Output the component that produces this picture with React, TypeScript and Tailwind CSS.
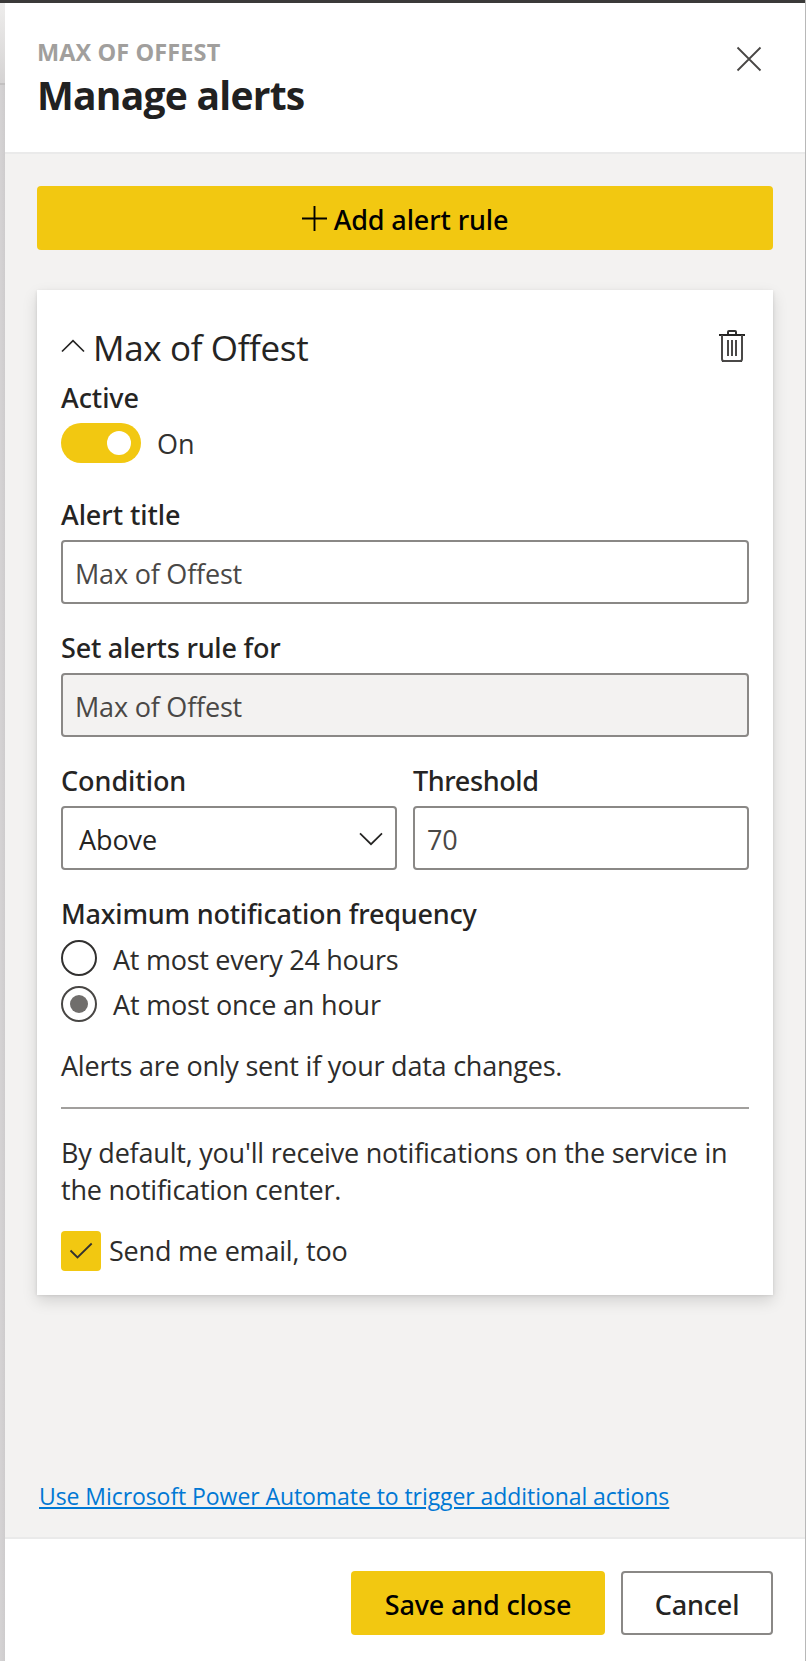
import type { ReactNode } from "react";

const body = "font-['Open_Sans',sans-serif] text-[27px] leading-[38px] font-normal whitespace-nowrap";
const semi = "font-['Noto_Sans',sans-serif] text-[27px] leading-[40px] font-medium whitespace-nowrap";

function Label({ tracking, children }: { tracking: string; children: ReactNode }) {
  return <label className={`block text-[#252423] ${semi} ${tracking}`}>{children}</label>;
}

function Field({ value, disabled = false }: { value: string; disabled?: boolean }) {
  return (
    <div
      className={`mt-[5px] flex h-16 items-center rounded border-2 border-[#8a8886] pt-[3px] pl-3 ${disabled ? "bg-[#f3f2f1]" : "bg-white"}`}
    >
      <span className={`${body} tracking-[-0.2px] text-[#4a4846]`}>{value}</span>
    </div>
  );
}

function Radio({ checked, tracking, pad, children }: { checked: boolean; tracking: string; pad: string; children: ReactNode }) {
  return (
    <div className="flex h-9 items-center gap-4">
      <span
        className={`flex size-9 shrink-0 items-center justify-center rounded-full border-2 ${checked ? "border-[#484644]" : "border-[#323130]"}`}
      >
        {checked && <span className="size-[18px] rounded-full bg-[#706e6c]" />}
      </span>
      <span className={`${body} ${tracking} ${pad} text-[#2d2c2b]`}>{children}</span>
    </div>
  );
}

function Chevron({ up = false }: { up?: boolean }) {
  return (
    <svg
      width="24"
      height="14"
      viewBox="0 0 24 14"
      fill="none"
      stroke="#252423"
      strokeWidth="1.7"
      className={up ? "mb-[3px] shrink-0" : "mt-px shrink-0"}
    >
      <path d={up ? "M1 12.5 12 1.6l11 10.9" : "M1 1.3l11 10.9L23 1.3"} />
    </svg>
  );
}

export default function App() {
  return (
    <div className="flex h-[1661px] w-[806px] overflow-hidden bg-white">
      <div className="flex min-w-0 flex-1 flex-col">
        <div className="h-[3px] shrink-0 bg-[#3b3a39]" />
        <div className="flex min-h-0 flex-1">
          <div className="flex w-[5px] shrink-0 flex-col">
            <div className="h-20 bg-linear-to-b from-[#eeedec] to-[#d5d3d3]" />
            <div className="h-0.5 bg-[#c2c0c0]" />
            <div className="flex-1 bg-linear-to-r from-[#d5d3d4] to-[#cecccd]" />
          </div>

          <div className="flex min-w-0 flex-1 flex-col">
            <header className="flex h-[151px] shrink-0 justify-between border-b-2 border-[#eaeaea] bg-white pt-[33px] pr-[43px] pl-8">
              <div>
                <div className="font-['Open_Sans',sans-serif] text-[23.5px] leading-8 font-bold tracking-[0.1px] whitespace-nowrap text-[#a19f9d]">
                  MAX OF OFFEST
                </div>
                <h1 className="font-['Open_Sans',sans-serif] text-[39px] leading-[54px] font-bold tracking-[-0.75px] whitespace-nowrap text-[#212121]">
                  Manage alerts
                </h1>
              </div>
              <svg width="26" height="26" viewBox="0 0 26 26" fill="none" stroke="#484644" strokeWidth="1.8" className="mt-2.5">
                <path d="M1.5 1.5l23 23M24.5 1.5l-23 23" />
              </svg>
            </header>

            <main className="flex min-h-0 flex-1 flex-col bg-[#f3f2f1] px-8 pt-8 pb-[25px]">
              <button className="flex h-16 shrink-0 items-center justify-center gap-[7px] rounded bg-[#f2c811] text-black">
                <svg width="25" height="25" viewBox="0 0 25 25" fill="none" stroke="#000" strokeWidth="1.9">
                  <path d="M12.5 0v25M0 12.5h25" />
                </svg>
                <span className={`${semi} pt-[3px] tracking-[-0.12px]`}>Add alert rule</span>
              </button>

              <section className="mt-10 h-[1005px] shrink-0 bg-white px-6 pt-[33px] shadow-[0_6.4px_14.4px_rgba(0,0,0,0.132),0_1.2px_3.6px_rgba(0,0,0,0.108)]">
                <div className="flex h-12 items-center gap-2">
                  <Chevron up />
                  <h2 className="pt-[2px] font-['Open_Sans',sans-serif] text-[35px] leading-[48px] font-normal tracking-[-0.35px] whitespace-nowrap text-[#252423]">
                    Max of Offest
                  </h2>
                  <svg width="28" height="34" viewBox="0 0 28 34" fill="none" className="mr-[3px] mb-[2px] ml-auto">
                    <path d="M1 6h26M4 31.9h20" stroke="#252423" strokeWidth="2" />
                    <path d="M10 5V3q0-1 1-1h6q1 0 1 1v2" stroke="#323130" strokeWidth="2" />
                    <path d="M4 6v24q0 2 2 2h16q2 0 2-2V6" stroke="#4a4847" strokeWidth="2" />
                    <path d="M10 11v16M14 11v16M18 11v16" stroke="#4a4847" strokeWidth="2" />
                  </svg>
                </div>

                <div className="mt-[7px]">
                  <Label tracking="tracking-[-0.05px]">Active</Label>
                </div>
                <div className="mt-[5px] flex h-10 items-center gap-4">
                  <span className="flex h-10 w-20 items-center justify-end rounded-full bg-[#f2c811] pr-2.5">
                    <span className="size-6 rounded-full bg-white" />
                  </span>
                  <span className={`${body} pt-[2px] text-[#323130]`}>On</span>
                </div>

                <div className="mt-8">
                  <Label tracking="tracking-[-0.05px]">Alert title</Label>
                  <Field value="Max of Offest" />
                </div>

                <div className="mt-6">
                  <Label tracking="tracking-[-0.22px]">Set alerts rule for</Label>
                  <Field value="Max of Offest" disabled />
                </div>

                <div className="mt-6 grid grid-cols-2 gap-4">
                  <div>
                    <Label tracking="tracking-[-0.05px]">Condition</Label>
                    <div className="mt-[5px] flex h-16 items-center justify-between rounded border-2 border-[#8a8886] bg-white pr-3 pl-4">
                      <span className={`${body} pt-[3px] tracking-[-0.1px] text-[#252423]`}>Above</span>
                      <Chevron />
                    </div>
                  </div>
                  <div>
                    <Label tracking="tracking-[-0.38px]">Threshold</Label>
                    <Field value="70" />
                  </div>
                </div>

                <div className="mt-6">
                  <Label tracking="tracking-[-0.2px]">Maximum notification frequency</Label>
                </div>
                <div className="mt-1.5 flex flex-col gap-2.5">
                  <Radio checked={false} tracking="tracking-[-0.26px]" pad="pt-[3px]">
                    At most every 24 hours
                  </Radio>
                  <Radio checked tracking="tracking-[-0.18px]" pad="pt-[1px]">
                    At most once an hour
                  </Radio>
                </div>

                <p className={`mt-[25px] ${body} tracking-[-0.22px] text-[#2d2c2b]`}>Alerts are only sent if your data changes.</p>
                <div className="mt-[22px] h-0.5 bg-[#a19f9d]" />
                <p className="mt-[25px] font-['Open_Sans',sans-serif] text-[27px] leading-[37px] tracking-[-0.21px] text-[#2d2c2b]">
                  By default, you'll receive notifications on the service in the notification center.
                </p>

                <div className="mt-[23px] flex h-10 items-center gap-2">
                  <span className="flex size-10 items-center justify-center rounded bg-[#f2c811]">
                    <svg width="24" height="18" viewBox="0 0 24 18" fill="none" stroke="#323130" strokeWidth="1.8">
                      <path d="M1.5 8.5l7 7L22.7 1.5" />
                    </svg>
                  </span>
                  <span className={`${body} tracking-[-0.2px] text-[#2d2c2b]`}>Send me email, too</span>
                </div>
              </section>

              <a
                href="#"
                className="mt-auto ml-0.5 self-start font-['Open_Sans',sans-serif] text-[23px] leading-8 tracking-[-0.07px] whitespace-nowrap text-[#0078d4] underline decoration-2 underline-offset-2"
              >
                Use Microsoft Power Automate to trigger additional actions
              </a>
            </main>

            <footer className="flex h-[124px] shrink-0 justify-end gap-4 border-t-2 border-[#eaeaea] bg-white pt-8 pr-8">
              <button className="flex h-16 w-[254px] items-center justify-center rounded bg-[#f2c811] pt-[3px] text-black">
                <span className={`${semi} tracking-[-0.17px]`}>Save and close</span>
              </button>
              <button className="flex h-16 w-[152px] items-center justify-center rounded border-2 border-[#8a8886] bg-white pt-[3px] text-[#252423]">
                <span className={`${semi} tracking-[-0.15px]`}>Cancel</span>
              </button>
            </footer>
          </div>
        </div>
      </div>
      <div className="w-px shrink-0 bg-[#b8b8b8]" />
    </div>
  );
}
